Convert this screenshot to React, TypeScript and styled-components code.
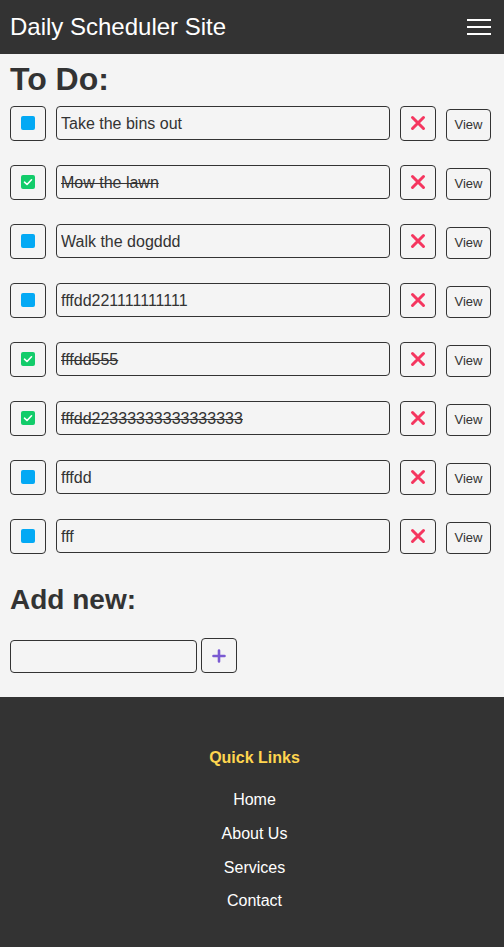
import React from "react";
import styled, { createGlobalStyle } from "styled-components";

const Global = createGlobalStyle`
  html, body { margin: 0; padding: 0; background: #f4f4f4; }
  body { font-family: "Liberation Sans", Arial, sans-serif; color: #333; }
  * { box-sizing: border-box; }
`;

const Header = styled.header`
  height: 54px;
  background: #333;
  display: flex;
  align-items: center;
  justify-content: space-between;
  padding: 0 13px 0 10px;
`;

const Title = styled.div`
  color: #fff;
  font-size: 24px;
  line-height: 27.6px;
`;

const Burger = styled.div`
  width: 24px;
  display: flex;
  flex-direction: column;
  gap: 5px;
  span {
    display: block;
    height: 2px;
    background: #fff;
  }
`;

const Main = styled.main`
  padding: 7px 13px 24px 10px;
`;

const H1 = styled.h1`
  margin: 0 0 8px;
  font-size: 32px;
  line-height: 36.8px;
  font-weight: bold;
  color: #333;
`;

const List = styled.div`
  display: flex;
  flex-direction: column;
  gap: 24px;
`;

const Row = styled.div`
  display: flex;
  align-items: center;
  gap: 10px;
  height: 35px;
`;

const SquareBtn = styled.button`
  width: 36px;
  height: 35px;
  flex: none;
  padding: 0;
  display: flex;
  align-items: center;
  justify-content: center;
  background: transparent;
  border: 1px solid #333;
  border-radius: 4px;
`;

const Box = styled.span<{ $done: boolean }>`
  width: 14px;
  height: 14px;
  border-radius: 2px;
  background: ${(p) => (p.$done ? "#12cc6a" : "#03a9f4")};
  display: flex;
  align-items: center;
  justify-content: center;
`;

const TextInput = styled.input<{ $done?: boolean }>`
  flex: 1;
  min-width: 0;
  height: 34px;
  padding: 1px 4px 0;
  border: 1px solid #333;
  border-radius: 4px;
  background: transparent;
  font-family: "Liberation Sans", Arial, sans-serif;
  font-size: 16px;
  color: #333;
  text-decoration: ${(p) => (p.$done ? "line-through" : "none")};
  outline: none;
`;

const ViewBtn = styled.button`
  width: 45px;
  height: 32px;
  flex: none;
  padding: 0;
  margin-top: 3px;
  background: transparent;
  border: 1px solid #333;
  border-radius: 4px;
  font-family: "Liberation Sans", Arial, sans-serif;
  font-size: 13px;
  color: #333;
`;

const H2 = styled.h2`
  margin: 30px 0 22px;
  font-size: 28px;
  line-height: 32.2px;
  font-weight: bold;
  color: #333;
`;

const AddRow = styled.div`
  display: flex;
  align-items: flex-end;
  gap: 4px;
`;

const AddInput = styled.input`
  width: 187px;
  height: 33px;
  border: 1px solid #333;
  border-radius: 4px;
  background: transparent;
  padding: 0 4px;
  font-size: 16px;
  outline: none;
`;

const Footer = styled.footer`
  background: #333;
  padding: 52px 0 41px 5px;
  display: flex;
  flex-direction: column;
  align-items: center;
`;

const FooterTitle = styled.div`
  color: #ffd54f;
  font-weight: bold;
  font-size: 16px;
  line-height: 18.4px;
  margin-bottom: 24px;
`;

const Links = styled.div`
  display: flex;
  flex-direction: column;
  align-items: center;
  gap: 15.2px;
`;

const FooterLink = styled.a`
  color: #fff;
  font-size: 16px;
  line-height: 18.4px;
  text-decoration: none;
`;

const todos = [
  { text: "Take the bins out", done: false },
  { text: "Mow the lawn", done: true },
  { text: "Walk the dogddd", done: false },
  { text: "fffdd221111111111", done: false },
  { text: "fffdd555", done: true },
  { text: "fffdd22333333333333333", done: true },
  { text: "fffdd", done: false },
  { text: "fff", done: false },
];

const Check = () => (
  <svg width="10" height="10" viewBox="0 0 10 10">
    <polyline points="1.5,5.2 4,7.5 8.5,2.8" fill="none" stroke="#fff" strokeWidth="1.6" strokeLinecap="round" strokeLinejoin="round" />
  </svg>
);

const Cross = () => (
  <svg width="16" height="16" viewBox="0 0 16 16">
    <path d="M2.5 2.5 L13.5 13.5 M13.5 2.5 L2.5 13.5" stroke="#f5365f" strokeWidth="3" strokeLinecap="round" />
  </svg>
);

const Plus = () => (
  <svg width="14" height="14" viewBox="0 0 14 14">
    <path d="M7 1.5 V12.5 M1.5 7 H12.5" stroke="#7a5ad2" strokeWidth="2.6" strokeLinecap="round" />
  </svg>
);

export default function App() {
  return (
    <>
      <Global />
      <Header>
        <Title>Daily Scheduler Site</Title>
        <Burger>
          <span />
          <span />
          <span />
        </Burger>
      </Header>
      <Main>
        <H1>To Do:</H1>
        <List>
          {todos.map((t, i) => (
            <Row key={i}>
              <SquareBtn>
                <Box $done={t.done}>{t.done && <Check />}</Box>
              </SquareBtn>
              <TextInput $done={t.done} defaultValue={t.text} />
              <SquareBtn>
                <Cross />
              </SquareBtn>
              <ViewBtn>View</ViewBtn>
            </Row>
          ))}
        </List>
        <H2>Add new:</H2>
        <AddRow>
          <AddInput />
          <SquareBtn>
            <Plus />
          </SquareBtn>
        </AddRow>
      </Main>
      <Footer>
        <FooterTitle>Quick Links</FooterTitle>
        <Links>
          <FooterLink href="#">Home</FooterLink>
          <FooterLink href="#">About Us</FooterLink>
          <FooterLink href="#">Services</FooterLink>
          <FooterLink href="#">Contact</FooterLink>
        </Links>
      </Footer>
    </>
  );
}
